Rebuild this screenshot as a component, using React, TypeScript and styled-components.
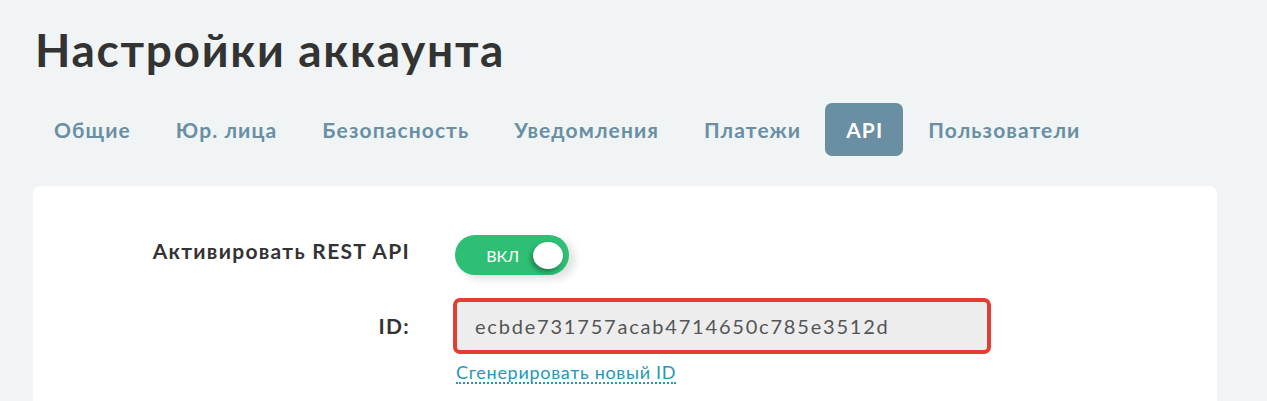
import styled, { createGlobalStyle } from "styled-components";

const GlobalStyle = createGlobalStyle`
  body {
    margin: 0;
    background: #f0f4f5;
    font-family: Lato, "Open Sans", sans-serif;
    color: #333;
  }
`;

const tabs = ["Общие", "Юр. лица", "Безопасность", "Уведомления", "Платежи", "API", "Пользователи"];

function App() {
  return (
    <Page>
      <GlobalStyle />
      <Title>Настройки аккаунта</Title>
      <Tabs>
        {tabs.map((t) => (
          <Tab key={t} $active={t === "API"}>{t}</Tab>
        ))}
      </Tabs>
      <Card>
        <Label>Активировать REST API</Label>
        <div>
          <Toggle>
            <ToggleText>ВКЛ</ToggleText>
            <Knob />
          </Toggle>
        </div>
        <Label $tall>ID:</Label>
        <Field>
          <IdBox>ecbde731757acab4714650c785e3512d</IdBox>
          <Link href="#">Сгенерировать новый ID</Link>
        </Field>
      </Card>
    </Page>
  );
}

export default App;

const Page = styled.div`
  padding: 0 50px 0 33px;
  height: 401px;
  overflow: hidden;
  box-sizing: border-box;
`;

const Title = styled.h1`
  margin: 0;
  padding: 22px 0 0 2px;
  font-size: 46px;
  line-height: 1.2;
  font-weight: 700;
  letter-spacing: 1.7px;
  color: #333;
`;

const Tabs = styled.div`
  display: flex;
  gap: 4px;
  margin-top: 26px;
`;

const Tab = styled.div<{ $active?: boolean }>`
  height: 53px;
  display: flex;
  align-items: center;
  padding: 0 20px 0 21px;
  border-radius: 7px;
  font-size: 21px;
  font-weight: 700;
  letter-spacing: 1.1px;
  color: ${(p) => (p.$active ? "#fff" : "#6a8fa3")};
  background: ${(p) => (p.$active ? "#6a8ea2" : "transparent")};
`;

const Card = styled.div`
  margin-top: 30px;
  background: #fff;
  border-radius: 8px;
  padding: 49px 0 0 0;
  display: grid;
  grid-template-columns: 377px 1fr;
  column-gap: 43px;
  row-gap: 23px;
  height: 300px;
  align-content: start;
`;

const Label = styled.div<{ $tall?: boolean }>`
  text-align: right;
  font-size: 21px;
  font-weight: 700;
  letter-spacing: 1.3px;
  color: #333;
  height: ${(p) => (p.$tall ? "56px" : "40px")};
  line-height: ${(p) => (p.$tall ? "56px" : "32px")};
`;

const Toggle = styled.div`
  margin-left: 2px;
  width: 114px;
  height: 40px;
  border-radius: 20px;
  background: #2ebf75;
  display: flex;
  align-items: center;
  justify-content: flex-end;
  padding-right: 6px;
  box-sizing: border-box;
  gap: 14px;
  box-shadow: 6px 4px 8px rgba(0, 0, 0, 0.12);
`;

const ToggleText = styled.span`
  color: #fff;
  font-size: 16px;
`;

const Knob = styled.span`
  width: 30px;
  height: 27px;
  border-radius: 50%;
  background: #fff;
  box-shadow: -2px 3px 5px rgba(0, 0, 0, 0.35);
`;

const Field = styled.div`
  display: flex;
  flex-direction: column;
  align-items: flex-start;
`;

const IdBox = styled.div`
  width: 538px;
  height: 56px;
  box-sizing: border-box;
  border: 4px solid #e43d31;
  border-radius: 7px;
  background: #ededed;
  padding-left: 18px;
  display: flex;
  align-items: center;
  font-size: 20px;
  letter-spacing: 1.8px;
  color: #555;
`;

const Link = styled.a`
  margin: 8px 0 0 3px;
  font-size: 18px;
  letter-spacing: 0.7px;
  color: #2498b6;
  text-decoration: none;
  border-bottom: 2px dotted #2498b6;
  line-height: 20px;
`;
